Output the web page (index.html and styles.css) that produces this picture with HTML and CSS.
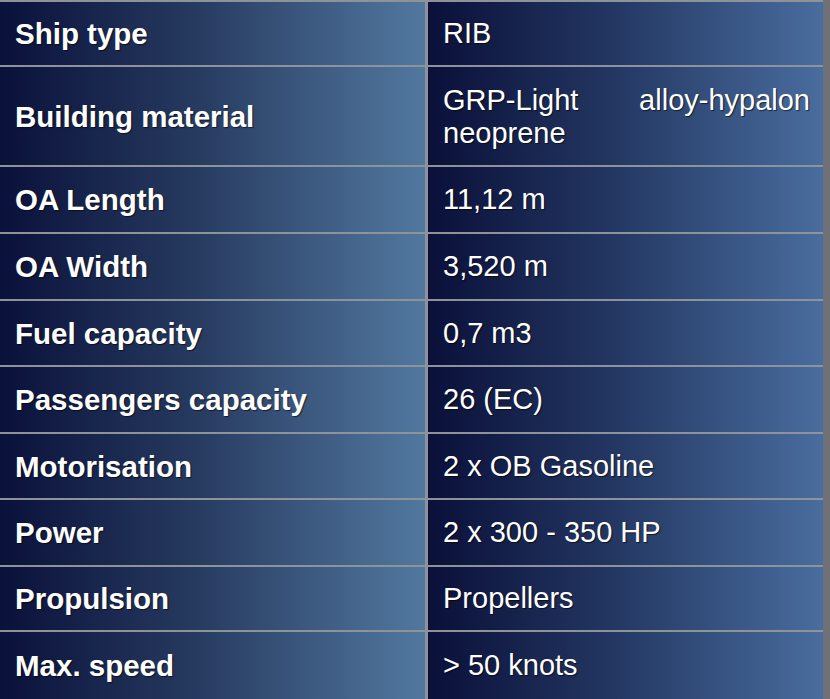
FILE: index.html
```html
<!DOCTYPE html>
<html>
<head>
<meta charset="utf-8">
<link rel="stylesheet" href="styles.css">
</head>
<body>
<div class="specs">
  <div class="cell label r1">Ship type</div><div class="cell value r1">RIB</div>
  <div class="cell label r2">Building material</div><div class="cell value r2 justify">GRP-Light alloy-hypalon neoprene</div>
  <div class="cell label r65">OA Length</div><div class="cell value r65">11,12 m</div>
  <div class="cell label r65">OA Width</div><div class="cell value r65">3,520 m</div>
  <div class="cell label r64">Fuel capacity</div><div class="cell value r64">0,7 m3</div>
  <div class="cell label r65">Passengers capacity</div><div class="cell value r65">26 (EC)</div>
  <div class="cell label r64">Motorisation</div><div class="cell value r64">2 x OB Gasoline</div>
  <div class="cell label r65">Power</div><div class="cell value r65">2 x 300 - 350 HP</div>
  <div class="cell label r63">Propulsion</div><div class="cell value r63">Propellers</div>
  <div class="cell label r67">Max. speed</div><div class="cell value r67">&gt; 50 knots</div>
</div>
</body>
</html>
```
FILE: styles.css
```css
html, body {
  margin: 0;
  padding: 0;
  background: #6e7278;
}
.specs {
  width: 830px;
  height: 699px;
  box-sizing: border-box;
  padding: 2px 7px 0 0;
  display: grid;
  grid-template-columns: 425px 395px;
  column-gap: 3px;
  row-gap: 2px;
  background: linear-gradient(to right, #8e9399 0, #8e9399 823px, #6e7278 823px);
  overflow: hidden;
  font-family: "Liberation Sans", Arial, sans-serif;
  color: #ffffff;
  font-size: 29px;
}
.cell {
  display: flex;
  align-items: center;
  box-sizing: border-box;
  text-shadow: 1px 1px 1px rgba(0, 0, 0, 0.6);
  line-height: 33px;
}
.label {
  padding-left: 15px;
  font-weight: bold;
  font-size: 29.5px;
  background: linear-gradient(to right, #0a113a 0%, #26395f 45%, #52789f 100%);
}
.value {
  padding-left: 15px;
  padding-right: 13px;
  background: linear-gradient(to right, #0a1039 0%, #223560 45%, #496d9e 100%);
}
.justify {
  text-align: justify;
  text-align-last: left;
  display: block;
  padding-top: 17px;
}
.r1 { height: 63px; }
.r2 { height: 98px; }
.r65 { height: 65px; }
.r64 { height: 64px; }
.r63 { height: 63px; }
.r67 { height: 67px; }
```
